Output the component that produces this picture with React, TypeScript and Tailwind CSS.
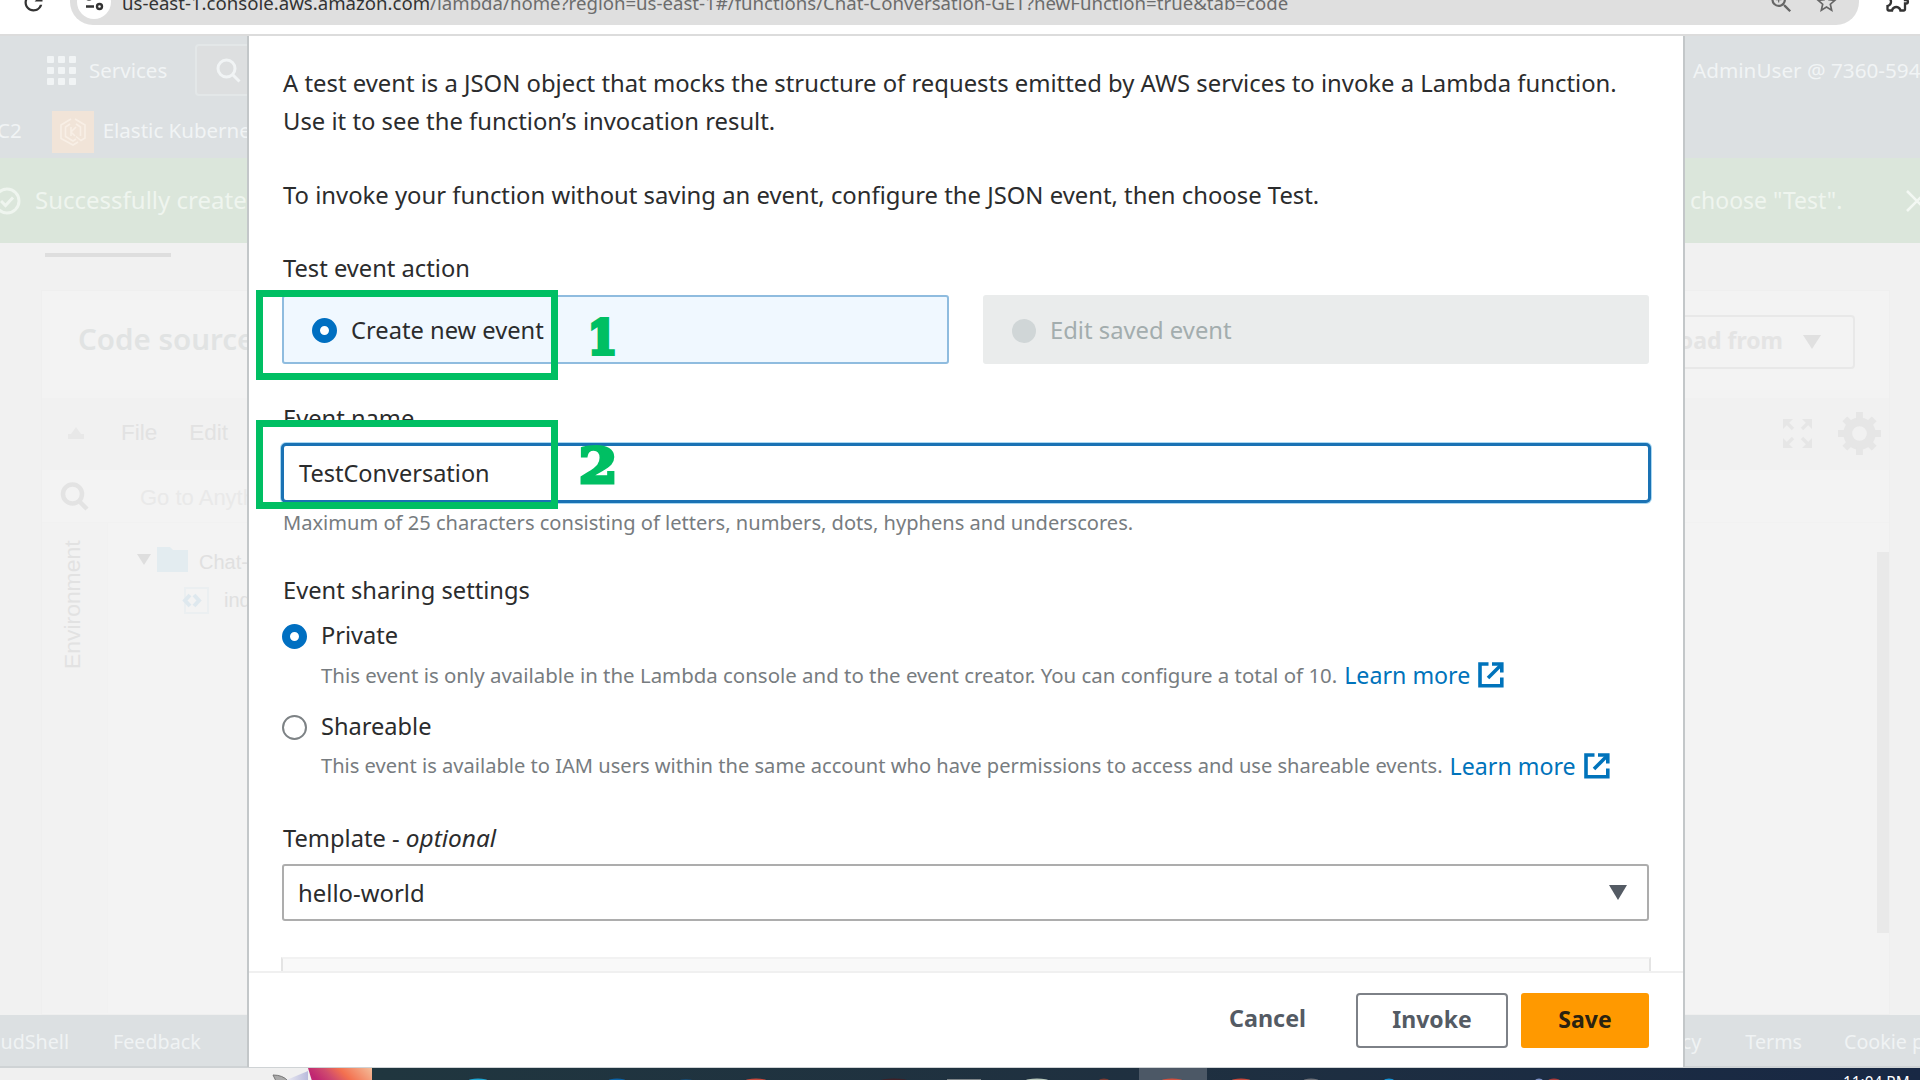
import type { ReactNode } from "react";
import { MdOutlineExtension, MdRefresh, MdStarBorder, MdZoomIn } from "react-icons/md";

function ExternalIcon() {
  return (
    <svg className="h-[26px] w-[26px] shrink-0" viewBox="0 0 26 26" fill="none" stroke="#0073bb" strokeWidth="3.6">
      <path d="M10.500 2H2v21.800h21.800V15.500" />
      <path d="M14 2h9.800v8.500" />
      <path d="M23.500 2.500 10 16" />
    </svg>
  );
}

function Radio({ state }: { state: "on" | "off" | "disabled" }) {
  if (state === "on") return <span className="size-[25px] shrink-0 rounded-full border-8 border-[#006fc1] bg-white" />;
  if (state === "off") return <span className="size-[25px] shrink-0 rounded-full border-2 border-[#7d8285] bg-white" />;
  return <span className="size-[24px] shrink-0 rounded-full bg-[#d0d6d7]" />;
}

function Label({ children }: { children: ReactNode }) {
  return <div className="h-[34px] text-[23.7px] leading-[34px]">{children}</div>;
}

function SharingOption({ label, on, children }: { label: string; on?: boolean; children: ReactNode }) {
  return (
    <div>
      <div className="flex h-[34px] items-center gap-[14px]">
        <span className="mt-[3px] -ml-px flex">
          <Radio state={on ? "on" : "off"} />
        </span>
        <span className="text-[23.6px] leading-[34px]">{label}</span>
      </div>
      <div className="mt-[9px] ml-[38px] flex h-[28px] items-center leading-[28px] whitespace-nowrap text-[#777c80]">
        {children}
        <span className="ml-[7px] text-[23.2px] text-[#0073bb]">Learn more</span>
        <span className="ml-[8px] flex">
          <ExternalIcon />
        </span>
      </div>
    </div>
  );
}

function BrowserBar() {
  return (
    <div className="flex h-[36px] items-start overflow-hidden border-b-2 border-[#dcdcdc] bg-white">
      <MdRefresh className="-mt-[11px] ml-[20px] size-[27px] shrink-0 text-[#333]" />
      <div className="-mt-[21px] ml-[23px] flex h-[46px] w-[1789px] shrink-0 items-center rounded-full bg-[#dfdfdf] pl-[7px]">
        <span className="flex size-[34px] shrink-0 items-center justify-center rounded-full bg-white">
          <svg className="size-[20px]" viewBox="0 0 20 20" fill="none" stroke="#333" strokeWidth="2.400">
            <circle cx="5" cy="5" r="2.500" />
            <path d="M10 5h8M2 14.500h8" />
            <circle cx="15.500" cy="14.500" r="2.500" />
          </svg>
        </span>
        <span className="mt-[2px] ml-[11px] text-[18.620px] leading-[26px] whitespace-nowrap text-[#6c6c6c]">
          <span className="text-[#333]">us-east-1.console.aws.amazon.com</span>
          /lambda/home?region=us-east-1#/functions/Chat-Conversation-GET?newFunction=true&tab=code
        </span>
        <MdZoomIn className="ml-auto size-[27px] text-[#666]" />
        <MdStarBorder className="mr-[20px] ml-[19px] size-[25px] text-[#666]" />
      </div>
      <MdOutlineExtension className="-mt-[14px] ml-[25px] size-[28px] shrink-0 text-[#333]" />
    </div>
  );
}

function ConsoleNav() {
  return (
    <div className="h-[122px] bg-[#dce0e2] text-[#f1f4f5]">
      <div className="flex h-[68px] items-center">
        <div className="ml-[47px] grid grid-cols-3 gap-[4px]">
          {Array.from({ length: 9 }, (_, i) => (
            <span key={i} className="size-[7px] rounded-[1px] bg-[#f1f4f5]" />
          ))}
        </div>
        <span className="ml-[13px] text-[20.500px]">Services</span>
        <div className="ml-[28px] flex h-[52px] w-[300px] items-center rounded-sm border-2 border-[#e3e7e8] bg-[#dddfe0] pl-[19px]">
          <svg className="size-[25px]" viewBox="0 0 25 25" fill="none" stroke="#f1f4f5" strokeWidth="3">
            <circle cx="10.500" cy="10.500" r="8.500" />
            <path d="m16.500 16.500 7 7" />
          </svg>
        </div>
        <span className="mt-[2px] ml-auto w-[227px] text-[20.700px] whitespace-nowrap">AdminUser @ 7360-594</span>
      </div>
      <div className="flex h-[52px] items-center">
        <span className="-ml-[3px] text-[20.500px]">C2</span>
        <span className="mt-[3px] ml-[30px] flex size-[42px] items-center justify-center bg-[#f1e4d8]">
          <svg className="size-[30px]" viewBox="0 0 30 30" fill="none" stroke="#f8efe6" strokeWidth="1.600">
            <path d="M13 2 3 8v13.500L15 28l5-3M17 2l10 6v13l-4 2.500-5-4" />
            <path d="M12 7 7.500 10v9.500l7.500 4.500 3-2M18 7l4.500 3V19" />
            <path d="M13 10v9M18 10l-5 5 4 4" />
          </svg>
        </span>
        <span className="ml-[9px] text-[20.500px] whitespace-nowrap">Elastic Kubernetes</span>
      </div>
    </div>
  );
}

function SuccessBanner() {
  return (
    <div className="flex h-[85px] items-center bg-[#dbe6db] text-[24px] text-[#eff5ef]">
      <svg className="-ml-[7px] size-[28px] shrink-0" viewBox="0 0 28 28" fill="none" stroke="#eff5ef" strokeWidth="3">
        <circle cx="14" cy="14" r="12" />
        <path d="m8 14 4.500 4.500L20 10.500" />
      </svg>
      <span className="-mt-[2px] ml-[14px] whitespace-nowrap">Successfully created</span>
      <span className="ml-auto w-[216px] text-[23px] whitespace-nowrap">choose "Test".</span>
      <svg className="-mr-[8px] size-[22px] shrink-0" viewBox="0 0 22 22" stroke="#f3f8f3" strokeWidth="2.500">
        <path d="m1 1 20 20M21 1 1 21" />
      </svg>
    </div>
  );
}

function CodePanel() {
  return (
    <div className="mt-[33px] mr-[30px] ml-[41px] h-[725px] border border-[#efefef] bg-[#f3f3f3]">
      <div className="flex h-[107px] items-start justify-between">
        <span className="mt-[24px] ml-[36px] text-[29.500px] leading-[48px] font-semibold text-[#e1e3e3]">Code source</span>
        <div className="mt-[24px] mr-[34px] flex h-[54px] w-[240px] items-center justify-end rounded-[4px] border-2 border-[#e8e8e8] pr-[32px] pb-[3px] text-[23px] font-bold text-[#e4e4e4]">
          Upload from
          <svg className="mt-[2px] ml-[20px] h-[14px] w-[18px]" viewBox="0 0 18 14" fill="#e0e0e0">
            <path d="M0 0h18L9 14z" />
          </svg>
        </div>
      </div>
      <div className="flex h-[72px] items-center bg-[#f1f1f1] pb-[2px] font-['Liberation_Sans',sans-serif] text-[22.500px] text-[#e2e2e2]">
        <svg className="ml-[26px] h-[12px] w-[16px]" viewBox="0 0 16 12" fill="#e8e8e8">
          <path d="M8 0l5 7h3v5H0V7h3z" />
        </svg>
        <span className="ml-[37px]">File</span>
        <span className="ml-[32px]">Edit</span>
        <svg className="ml-auto size-[29px]" viewBox="0 0 29 29" fill="#e6e6e6" stroke="#e6e6e6" strokeWidth="3.500">
          <path stroke="none" d="M0 0h10L0 10zM29 0v10L19 0zM0 29V19l10 10zM29 29H19l10-10z" />
          <path d="m4 4 6 6M25 4l-6 6M4 25l6-6M25 25l-6-6" />
        </svg>
        <svg className="mr-[8px] ml-[26px] size-[43px]" viewBox="-22 -22 44 44" fill="none" stroke="#e6e6e6">
          <circle r="12" strokeWidth="9" />
          <path
            strokeWidth="7"
            d="M0-22v8M0 22v-8M-22 0h8M22 0h-8M-15-15l5 5M15 15l-5-5M15-15l-5 5M-15 15l5-5"
          />
        </svg>
      </div>
      <div className="flex h-[53px] items-center border-b border-[#f1f1f1] font-['Liberation_Sans',sans-serif] text-[22px] text-[#e9e9e9]">
        <svg className="ml-[18px] size-[29px]" viewBox="0 0 29 29" fill="none" stroke="#e3e3e3" strokeWidth="4.500">
          <circle cx="12.500" cy="12" r="9.500" />
          <path d="m19 19 8 8" />
        </svg>
        <span className="mt-[2px] ml-[51px] whitespace-nowrap">Go to Anything</span>
      </div>
      <div className="flex h-[490px] font-['Liberation_Sans',sans-serif] text-[20px] text-[#e0e0e0]">
        <div className="flex w-[66px] justify-center border-r border-[#f1f1f1] bg-[#f2f2f2] pt-[18px] pr-[5px]">
          <span className="h-[128px] rotate-180 text-[22.900px] leading-[24px] text-[#e2e2e2] [writing-mode:vertical-rl]">
            Environment
          </span>
        </div>
        <div className="pt-[21px] pl-[29px]">
          <div className="flex h-[34px] items-center">
            <svg className="-mt-[4px] h-[11px] w-[14px]" viewBox="0 0 14 11" fill="#dedede">
              <path d="M0 0h14L7 11z" />
            </svg>
            <svg className="-mt-[4px] ml-[6px] h-[25px] w-[31px]" viewBox="0 0 31 25" fill="#e3ecf0">
              <path d="M0 0h13l3 3h15v22H0z" />
            </svg>
            <span className="mt-[2px] ml-[11px] whitespace-nowrap">Chat-Conversation</span>
          </div>
          <div className="mt-[5px] ml-[45px] flex h-[34px] items-center">
            <svg className="size-[27px]" viewBox="0 0 27 27" fill="none" stroke="#ebeff1" strokeWidth="2">
              <path d="M3 1h23v25H3z" />
              <path stroke="#dee8ee" strokeWidth="4" d="M8 8 3 13.500 8 19M12 8l5 5.500L12 19" />
            </svg>
            <span className="ml-[15px]">index.mjs</span>
          </div>
        </div>
        <div className="mt-[29px] ml-auto h-[381px] w-[12px] bg-[#e9e9e9]" />
      </div>
    </div>
  );
}

function ConsoleFooter() {
  return (
    <div className="flex h-[53px] items-center border-b-2 border-[#cfd3d5] bg-[#dce0e2] pt-[3px] text-[19.700px] whitespace-nowrap text-[#f0f3f4]">
      <span className="flex w-[69px] justify-end">CloudShell</span>
      <span className="ml-[44px]">Feedback</span>
      <span className="ml-auto">Privacy</span>
      <span className="ml-[44px]">Terms</span>
      <span className="ml-[42px] w-[76px]">Cookie preferences</span>
    </div>
  );
}

function Taskbar() {
  return (
    <div className="flex h-[12px] overflow-hidden bg-[#f0f0f0]">
      <svg className="ml-[270px] h-[13px] w-[102px] shrink-0" viewBox="0 0 102 13">
        <defs>
          <linearGradient id="wall" x1="0" x2="1" y1=".2" y2="0">
            <stop offset="0" stopColor="#c02672" />
            <stop offset=".25" stopColor="#cf4a6e" />
            <stop offset=".5" stopColor="#f3704f" />
            <stop offset="1" stopColor="#f3bd9a" />
          </linearGradient>
          <linearGradient id="mist" x1="0" x2="1">
            <stop offset="0" stopColor="#efeff4" />
            <stop offset="1" stopColor="#b9bbdc" />
          </linearGradient>
        </defs>
        <path d="M14 13 38 3v10z" fill="url(#mist)" />
        <path d="M3 7q10 0 15 6H6z" fill="#aaa" stroke="#777" />
        <path d="M38 0h64v13H42z" fill="url(#wall)" />
      </svg>
      <svg className="h-[13px] w-[1548px] shrink-0" viewBox="372 0 1548 13">
        <defs>
          <linearGradient id="bar" x1="0" x2="1">
            <stop offset="0" stopColor="#20363f" />
            <stop offset=".5" stopColor="#1f3040" />
            <stop offset="1" stopColor="#182844" />
          </linearGradient>
        </defs>
        <path d="M372 0h1548v13H372z" fill="url(#bar)" />
        <path d="M1139 0h68v13h-68z" fill="#4c5866" />
        <path d="M947 11h34v2h-34z" fill="#7d8488" />
        <ellipse cx="478" cy="13" rx="10" ry="2.500" fill="#1fa7d4" />
        <ellipse cx="617" cy="13" rx="9" ry="2.500" fill="#0b63a8" />
        <ellipse cx="686" cy="13" rx="7" ry="2" fill="#164a73" />
        <ellipse cx="756" cy="13" rx="11" ry="2.500" fill="#c8493c" />
        <ellipse cx="894" cy="13" rx="14" ry="2.500" fill="#3f2027" />
        <ellipse cx="1037" cy="13" rx="12" ry="2.500" fill="#b9c9bd" />
        <ellipse cx="1104" cy="13" rx="5" ry="2.500" fill="#7a3b33" />
        <ellipse cx="1172" cy="13" rx="11" ry="2.500" fill="#d3503f" />
        <ellipse cx="1241" cy="13" rx="10" ry="2.500" fill="#c8493c" />
        <ellipse cx="1311" cy="13" rx="8" ry="2.500" fill="#6d7078" />
        <ellipse cx="1389" cy="13" rx="5" ry="2.500" fill="#1593d6" />
        <ellipse cx="1539" cy="13" rx="4" ry="2.500" fill="#7d90c4" />
        <ellipse cx="1554" cy="13" rx="6" ry="2.500" fill="#a93c3c" />
      </svg>
      <span className="mt-[5px] -ml-[77px] shrink-0 text-[15.400px] leading-[20px] whitespace-nowrap text-white">11:04 PM</span>
    </div>
  );
}

function TestEventModal() {
  return (
    <div className="absolute top-[36px] left-[247px] flex h-[1031px] w-[1438px] flex-col border-x-2 border-[#c3c7c9] bg-white text-[#2b2c2d]">
      <div className="h-[935px] overflow-hidden px-[34px] pt-[28px]">
        <div className="text-[23.840px] leading-[38px] whitespace-nowrap">
          <p>
            A test event is a JSON object that mocks the structure of requests emitted by AWS services to invoke a Lambda
            function.
          </p>
          <p>Use it to see the function’s invocation result.</p>
          <p className="mt-[36px]">
            To invoke your function without saving an event, configure the JSON event, then choose Test.
          </p>
        </div>
        <div className="mt-[37px]">
          <Label>Test event action</Label>
        </div>
        <div className="mt-[10px] -ml-px flex gap-[34px]">
          <div className="flex h-[69px] w-[667px] items-center gap-[14px] rounded-[3px] border-2 border-[#8fbcdf] bg-[#f0f8ff] pt-[2px] pl-[28px] text-[23.700px]">
            <Radio state="on" />
            <span>Create new event</span>
          </div>
          <div className="flex h-[69px] w-[666px] items-center gap-[14px] rounded-[3px] bg-[#eaecec] pt-[2px] pl-[29px] text-[23.800px] text-[#a3adae]">
            <Radio state="disabled" />
            <span>Edit saved event</span>
          </div>
        </div>
        <div className="mt-[37px]">
          <Label>Event name</Label>
        </div>
        <div className="mt-[8px] -ml-[2px] flex h-[60px] w-[1370px] items-center rounded-[5px] border-[3px] border-[#1a72b4] bg-white pt-[2px] pl-[15px] text-[23.500px] shadow-[0_0_0_1px_#a9d8f2]">
          TestConversation
        </div>
        <div className="mt-[6px] text-[20.080px] leading-[28px] text-[#777c80]">
          Maximum of 25 characters consisting of letters, numbers, dots, hyphens and underscores.
        </div>
        <div className="mt-[36px]">
          <Label>Event sharing settings</Label>
          <div className="mt-[11px]">
            <SharingOption on label="Private">
              <span className="text-[20.430px]">
                This event is only available in the Lambda console and to the event creator. You can configure a total of 10.
              </span>
            </SharingOption>
          </div>
          <div className="mt-[20px]">
            <SharingOption label="Shareable">
              <span className="text-[20.100px]">
                This event is available to IAM users within the same account who have permissions to access and use
                shareable events.
              </span>
            </SharingOption>
          </div>
        </div>
        <div className="mt-[41px]">
          <Label>
            Template - <em className="text-[24.400px]">optional</em>
          </Label>
        </div>
        <div className="mt-[9px] -ml-px flex h-[57px] w-[1367px] items-center justify-between rounded-[3px] border-2 border-[#adadad] pr-[20px] pl-[14px] text-[23.900px]">
          hello-world
          <svg className="h-[15px] w-[18px]" viewBox="0 0 18 15" fill="#545b64">
            <path d="M0 0h18L9 15z" />
          </svg>
        </div>
        <div className="mt-[36px] -ml-[2px] h-[30px] w-[1370px] border-2 border-[#e4e4e4] border-t-[#f2f2f2] bg-[#f9f9f9]" />
      </div>
      <div className="flex h-[96px] items-start justify-end border-t-2 border-[#f0f0f0] pt-[20px] pr-[34px] text-[23px] font-bold text-[#545b64]">
        <span className="mr-[50px] text-[23.300px] leading-[51px]">Cancel</span>
        <span className="h-[55px] w-[152px] rounded-[4px] border-2 border-[#7d8187] text-center leading-[49px]">Invoke</span>
        <span className="ml-[13px] h-[55px] w-[128px] rounded-[3px] border-2 border-[#ff9900] bg-[#ff9900] text-center leading-[49px] text-[#2a2210]">
          Save
        </span>
      </div>
    </div>
  );
}

function Annotations() {
  return (
    <>
      <div className="absolute top-[290px] left-[256px] h-[90px] w-[302px] border-[7px] border-[#00bf63]" />
      <div className="absolute top-[420px] left-[256px] h-[89px] w-[302px] border-[7px] border-[#00bf63]" />
      <span className="absolute top-[308px] left-[586px] scale-x-90 font-['DejaVu_Serif',serif] text-[47px] leading-[60px] font-bold text-[#00bf63] [-webkit-text-stroke:4px_#00bf63]">
        1
      </span>
      <span className="absolute top-[436px] left-[581px] origin-center scale-x-115 font-['DejaVu_Serif',serif] text-[49px] leading-[60px] font-bold text-[#00bf63] [-webkit-text-stroke:3px_#00bf63]">
        2
      </span>
    </>
  );
}

export default function App() {
  return (
    <div className="relative h-[1080px] w-[1920px] overflow-hidden bg-[#f1f1f1] font-['Noto_Sans',sans-serif]">
      <BrowserBar />
      <ConsoleNav />
      <SuccessBanner />
      <div className="flex h-[14px] items-end">
        <div className="ml-[45px] h-[4px] w-[126px] bg-[#dedede]" />
      </div>
      <CodePanel />
      <ConsoleFooter />
      <Taskbar />
      <TestEventModal />
      <Annotations />
    </div>
  );
}
